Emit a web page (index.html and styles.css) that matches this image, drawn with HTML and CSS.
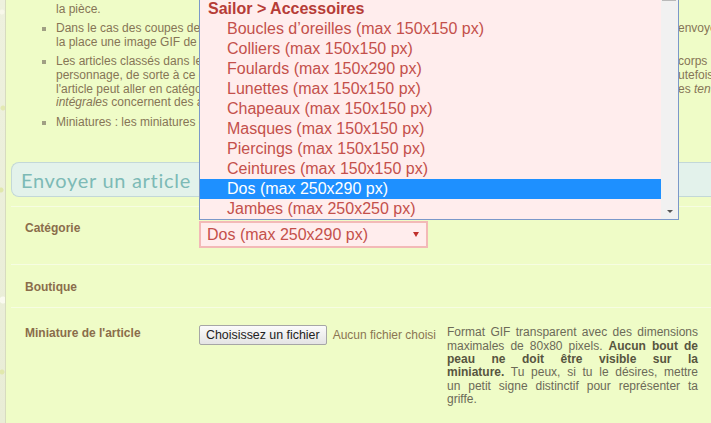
FILE: index.html
```html
<!DOCTYPE html>
<html lang="fr">
<head>
<meta charset="utf-8">
<title>Envoyer un article</title>
<link rel="stylesheet" href="styles.css">
</head>
<body>
<div class="page">
  <div class="strip"></div>
  <div class="main">
    <ul class="rules">
      <li class="cont">
        <div class="ln"><span class="l">la pièce.</span></div>
      </li>
      <li>
        <div class="ln"><span class="l">Dans le cas des coupes de cheveux, merci de nous envoyer en</span><span class="r">envoyez</span></div>
        <div class="ln"><span class="l">la place une image GIF de la coiffure seule.</span></div>
      </li>
      <li>
        <div class="ln"><span class="l">Les articles classés dans les catégories du corps</span><span class="r"> corps</span></div>
        <div class="ln"><span class="l">personnage, de sorte à ce qu'ils s'adaptent; toutefois</span><span class="r">utefois</span></div>
        <div class="ln"><span class="l">l'article peut aller en catégorie libre. Les</span><span class="r">es <i>tenues</i></span></div>
        <div class="ln"><span class="l"><i>intégrales</i> concernent des articles complets.</span></div>
      </li>
      <li>
        <div class="ln"><span class="l">Miniatures : les miniatures doivent être au format GIF.</span></div>
      </li>
    </ul>

    <div class="title">Envoyer un article</div>

    <div class="form">
      <div class="row row-cat">
        <div class="label">Catégorie</div>
        <div class="field">
          <div class="select">Dos (max 250x290 px)<span class="caret"></span></div>
        </div>
      </div>
      <div class="row row-shop">
        <div class="label">Boutique</div>
      </div>
      <div class="row row-thumb">
        <div class="label">Miniature de l'article</div>
        <div class="field file">
          <span class="btn">Choisissez un fichier</span>
          <span class="none">Aucun fichier choisi</span>
        </div>
        <div class="help">
          <div class="hl">Format GIF transparent avec des dimensions</div>
          <div class="hl">maximales de 80x80 pixels. <b>Aucun bout de</b></div>
          <div class="hl"><b>peau ne doit être visible sur la</b></div>
          <div class="hl"><b>miniature.</b> Tu peux, si tu le désires, mettre</div>
          <div class="hl">un petit signe distinctif pour représenter ta</div>
          <div class="hl last">griffe.</div>
        </div>
      </div>
    </div>
  </div>
</div>

<div class="dropdown">
  <div class="opts">
    <div class="grp">Sailor &gt; Accessoires</div>
    <div class="opt">Boucles d’oreilles (max 150x150 px)</div>
    <div class="opt">Colliers (max 150x150 px)</div>
    <div class="opt">Foulards (max 150x290 px)</div>
    <div class="opt">Lunettes (max 150x150 px)</div>
    <div class="opt">Chapeaux (max 150x150 px)</div>
    <div class="opt">Masques (max 150x150 px)</div>
    <div class="opt">Piercings (max 150x150 px)</div>
    <div class="opt">Ceintures (max 150x150 px)</div>
    <div class="opt sel">Dos (max 250x290 px)</div>
    <div class="opt">Jambes (max 250x250 px)</div>
  </div>
  <div class="sb">
    <div class="thumb"></div>
    <div class="down"></div>
  </div>
</div>
</body>
</html>
```

FILE: styles.css
```css
html, body {
  margin: 0;
  padding: 0;
}
body {
  width: 711px;
  height: 423px;
  overflow: hidden;
  position: relative;
  font-family: "Liberation Sans", Arial, sans-serif;
  font-size: 12px;
  background: #effcc7;
}
.page {
  display: flex;
  min-height: 423px;
}
.strip {
  width: 5px;
  flex: none;
  border-right: 1px solid #d7dbbf;
  background:
    radial-gradient(circle at 2px 12px, #f8f8ea 2px, transparent 3px),
    radial-gradient(circle at 3px 108px, #e3e9b2 2px, transparent 3px),
    radial-gradient(circle at 1px 190px, #e0e7ab 2px, transparent 3px),
    radial-gradient(circle at 3px 300px, #fafaf0 3px, transparent 4px),
    radial-gradient(circle at 2px 372px, #e1e8ad 2px, transparent 3px),
    linear-gradient(#eef1de, #e9edd6);
}
.main {
  flex: 1;
  min-width: 0;
}

/* rules list */
.rules {
  list-style: none;
  margin: 0;
  padding: 3px 0 0 50px;
  color: #867556;
  line-height: 13.7px;
}
.rules li {
  position: relative;
  margin-bottom: 5.6px;
}
.rules li::before {
  content: "";
  position: absolute;
  left: -14px;
  top: 5px;
  width: 4px;
  height: 4px;
  background: #a09f84;
}
.rules li.cont::before {
  display: none;
}
.ln {
  display: grid;
  grid-template-columns: 622px auto;
  white-space: nowrap;
}
.ln .l {
  overflow: hidden;
}
.ln .r {
  overflow: hidden;
}

/* title */
.title {
  margin: 33px 0 0 5px;
  height: 33px;
  border: 1px solid #c3d8d8;
  border-right: none;
  border-radius: 8px 0 0 8px;
  background: #e3f2eb;
  color: #7dbab6;
  font-family: Lato, "Open Sans", sans-serif;
  font-size: 20px;
  line-height: 34px;
  padding-left: 9px;
  letter-spacing: 0.7px;
}

/* form */
.form {
  margin: 9px 0 0 5px;
}
.row {
  display: grid;
  grid-template-columns: 188px 248px 251px;
  align-items: start;
  border-top: 1px solid #f6fde2;
}
.label {
  padding-left: 14px;
  font-weight: bold;
  color: #8a6d4b;
  line-height: 14px;
}
.row-cat {
  padding: 14px 0 16px;
}
.row-shop {
  height: 43px;
  padding-top: 15px;
  box-sizing: border-box;
}
.row-thumb {
  padding-top: 17px;
}
.row-thumb .label {
  padding-top: 1px;
}

.select {
  position: relative;
  width: 229px;
  height: 27px;
  box-sizing: border-box;
  border: 2px solid #f3b9b7;
  background: #ffeded;
  color: #c4504b;
  font-size: 16px;
  line-height: 23px;
  padding-left: 6px;
}
.caret {
  position: absolute;
  right: 7px;
  top: 9px;
  width: 0;
  height: 0;
  border-left: 3px solid transparent;
  border-right: 3px solid transparent;
  border-top: 5px solid #c0302c;
}

.file {
  display: flex;
  align-items: center;
  gap: 6px;
  white-space: nowrap;
}
.btn {
  display: inline-block;
  height: 20px;
  box-sizing: border-box;
  padding: 0 6px;
  border: 1px solid #a6a6a6;
  border-radius: 2px;
  background: linear-gradient(#fbfbfb, #e4e4e4);
  color: #222;
  font-size: 12.4px;
  line-height: 18px;
}
.none {
  color: #8b7552;
}

.help {
  color: #6c6a58;
  line-height: 13.3px;
  padding-top: 1px;
}
.hl {
  text-align: justify;
  text-align-last: justify;
  white-space: nowrap;
}
.hl.last {
  text-align-last: left;
}
.help b {
  color: #57553f;
}

/* open dropdown */
.dropdown {
  position: absolute;
  left: 199px;
  top: 0;
  width: 480px;
  height: 220px;
  box-sizing: border-box;
  border: 1px solid #7b98c9;
  border-top: none;
  background: #ffeded;
  display: flex;
  overflow: hidden;
}
.opts {
  flex: 1;
  margin-top: -1px;
  font-size: 16px;
}
.grp {
  height: 20px;
  line-height: 20px;
  padding-left: 8px;
  font-weight: bold;
  color: #b63c37;
}
.opt {
  height: 20px;
  line-height: 20px;
  padding-left: 27px;
  color: #c4504b;
  white-space: nowrap;
}
.opt.sel {
  background: #1e90ff;
  color: #ffffff;
}
.sb {
  width: 17px;
  flex: none;
  background: #f1f1f1;
  position: relative;
}
.thumb {
  position: absolute;
  left: 1px;
  right: 2px;
  top: -30px;
  height: 31px;
  background: #b9b9b9;
}
.down {
  position: absolute;
  left: 6px;
  bottom: 6px;
  width: 0;
  height: 0;
  border-left: 3px solid transparent;
  border-right: 3px solid transparent;
  border-top: 3px solid #555;
}
```
